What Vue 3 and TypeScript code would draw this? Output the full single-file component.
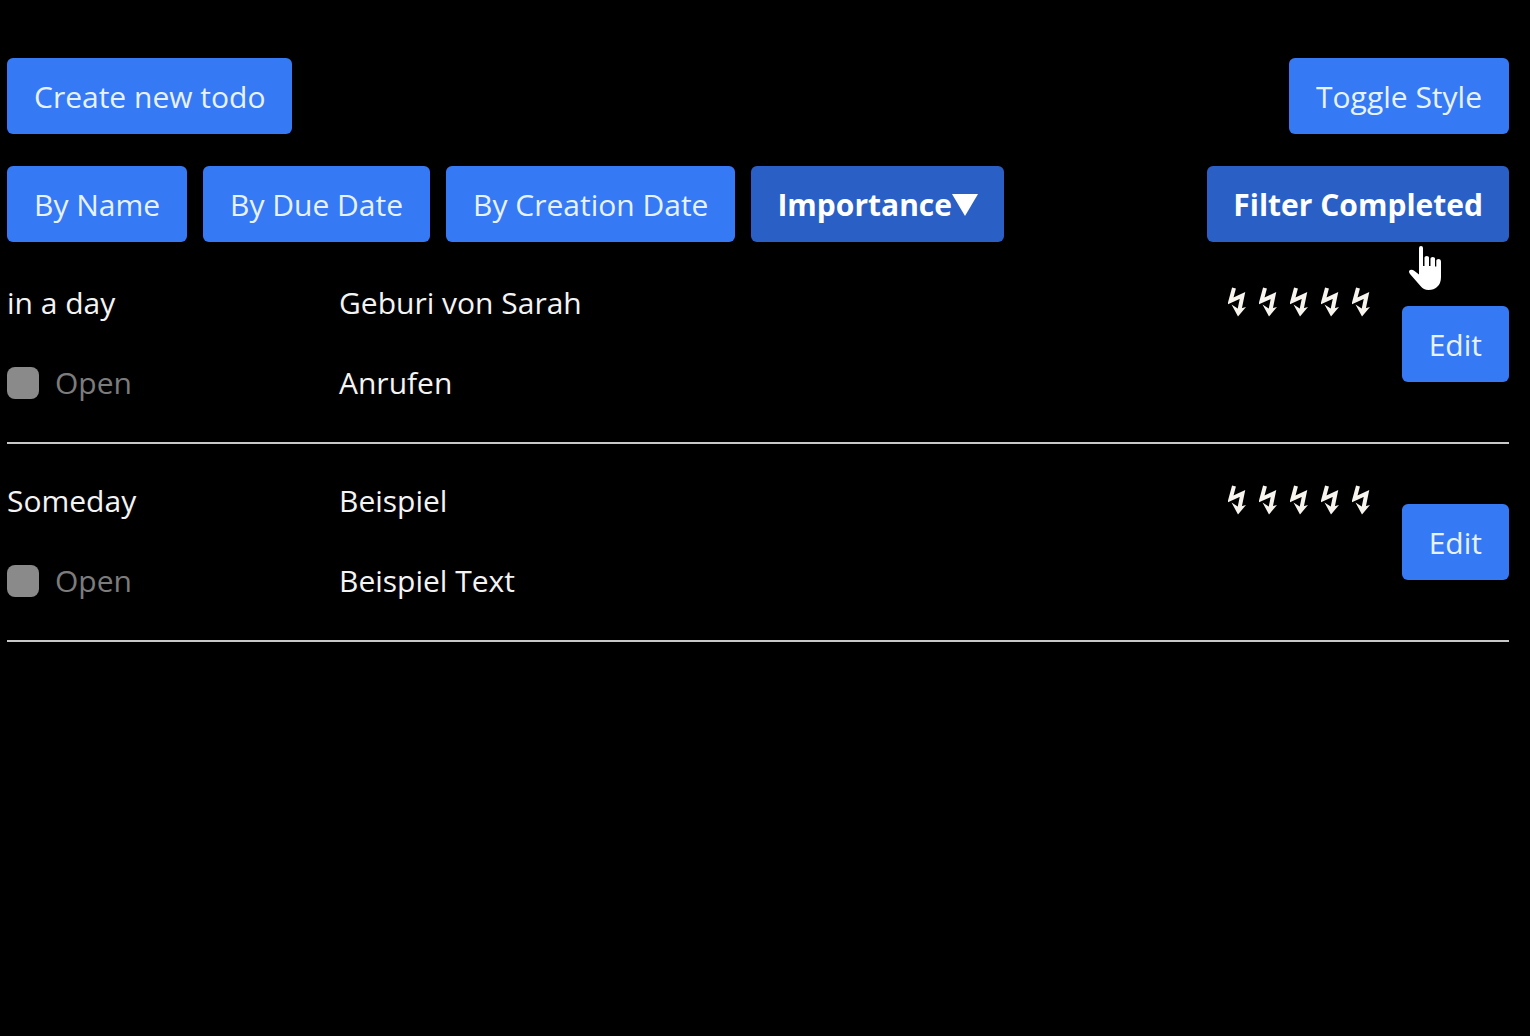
<script setup lang="ts">
import { ref } from 'vue'

interface Todo {
  id: number
  due: string
  title: string
  text: string
  importance: number
  done: boolean
}

const sortOptions = [
  { key: 'name', label: 'By Name' },
  { key: 'due', label: 'By Due Date' },
  { key: 'created', label: 'By Creation Date' },
  { key: 'importance', label: 'Importance' },
]

const sortKey = ref('importance')
const filterCompleted = ref(true)

const todos = ref<Todo[]>([
  { id: 1, due: 'in a day', title: 'Geburi von Sarah', text: 'Anrufen', importance: 5, done: false },
  { id: 2, due: 'Someday', title: 'Beispiel', text: 'Beispiel Text', importance: 5, done: false },
])
</script>

<template>
  <main class="app">
    <header class="bar">
      <button type="button" class="btn">Create new todo</button>
      <button type="button" class="btn">Toggle Style</button>
    </header>

    <nav class="bar">
      <div class="sorts">
        <button
          v-for="option in sortOptions"
          :key="option.key"
          type="button"
          class="btn"
          :class="{ active: sortKey === option.key }"
          @click="sortKey = option.key"
        >
          {{ option.label }}<svg v-if="sortKey === option.key" class="caret" viewBox="0 0 26 22" aria-hidden="true"><path d="M0 0H26L13 22Z" /></svg>
        </button>
      </div>
      <div class="filter">
        <button
          type="button"
          class="btn"
          :class="{ active: filterCompleted }"
          @click="filterCompleted = !filterCompleted"
        >
          Filter Completed
        </button>
        <svg class="pointer" viewBox="0 0 32 44" aria-hidden="true">
          <path d="M10 2Q10 0 12 0Q14 0 14 2V20H15.500V11.500Q15.500 10 17.750 10Q20 10 20 11.500V20H21.500V12.500Q21.500 11 23.750 11Q26 11 26 12.500V20.500H27.300V14.500Q27.300 13 29.500 13Q32 13 32 16V31Q32 38 28 41Q25 44 19.500 44Q14.500 44 11.500 40L1 28Q-1 25 1 24Q3 23 5.500 25L10 28.500Z" />
        </svg>
      </div>
    </nav>

    <ul class="list">
      <li v-for="todo in todos" :key="todo.id" class="todo">
        <div class="column">
          <span>{{ todo.due }}</span>
          <label class="state">
            <input v-model="todo.done" type="checkbox" disabled />
            <span>{{ todo.done ? 'Done' : 'Open' }}</span>
          </label>
        </div>
        <div class="column">
          <span>{{ todo.title }}</span>
          <span>{{ todo.text }}</span>
        </div>
        <div class="importance" role="img" :aria-label="`Importance ${todo.importance}`">
          <svg v-for="n in todo.importance" :key="n" class="bolt" viewBox="0 0 18 30" aria-hidden="true">
            <path class="stroke" d="M6 1L2.500 14L14.500 8.500L11.500 23" />
            <path d="M3.500 17.500L10.500 22L18 20L10 29.500Z" />
          </svg>
        </div>
        <button type="button" class="btn">Edit</button>
      </li>
    </ul>
  </main>
</template>

<style>
body {
  background: #000;
}
</style>

<style scoped>
.app {
  padding: 58px 21px 32px 7px;
  color: #f4f4f4;
  font-family: "Open Sans", "Noto Sans", sans-serif;
  font-size: 30px;
  line-height: 48px;
}

.bar {
  display: flex;
  justify-content: space-between;
  margin-bottom: 32px;
}

nav.bar {
  margin-bottom: 4px;
}

.sorts {
  display: flex;
  gap: 16px;
}

.btn {
  padding: 15px 27px 13px;
  border: 0;
  border-radius: 6px;
  background: #3679f4;
  color: #e6f3ff;
  font: inherit;
  white-space: nowrap;
  cursor: pointer;
}

.btn.active {
  padding-inline: 26px;
  background: #2a60c5;
  color: #fff;
  font-weight: 700;
}

.caret {
  width: 26px;
  height: 22px;
  fill: currentColor;
}

.filter {
  position: relative;
}

.pointer {
  position: absolute;
  top: 80px;
  right: 68px;
  width: 32px;
  height: 44px;
  fill: #fff;
  pointer-events: none;
}

.list {
  margin: 0;
  padding: 0;
  list-style: none;
}

.todo {
  display: grid;
  grid-template-columns: 300px 1fr auto auto;
  column-gap: 32px;
  align-items: center;
  padding: 33px 0;
  border-bottom: 2px solid #c8c8c8;
}

.column {
  display: flex;
  flex-direction: column;
  gap: 32px;
  padding-bottom: 2px;
}

.state {
  display: flex;
  align-items: center;
  gap: 16px;
  color: #7c7c7c;
}

.state input {
  appearance: none;
  width: 32px;
  height: 32px;
  margin: 0;
  border-radius: 8px;
  background: #8a8a8a;
}

.importance {
  display: flex;
  align-self: start;
  gap: 13px;
  padding-top: 8px;
}

.bolt {
  width: 18px;
  height: 30px;
  fill: #f8f4ee;
}

.bolt .stroke {
  fill: none;
  stroke: #f8f4ee;
  stroke-width: 4;
}
</style>
